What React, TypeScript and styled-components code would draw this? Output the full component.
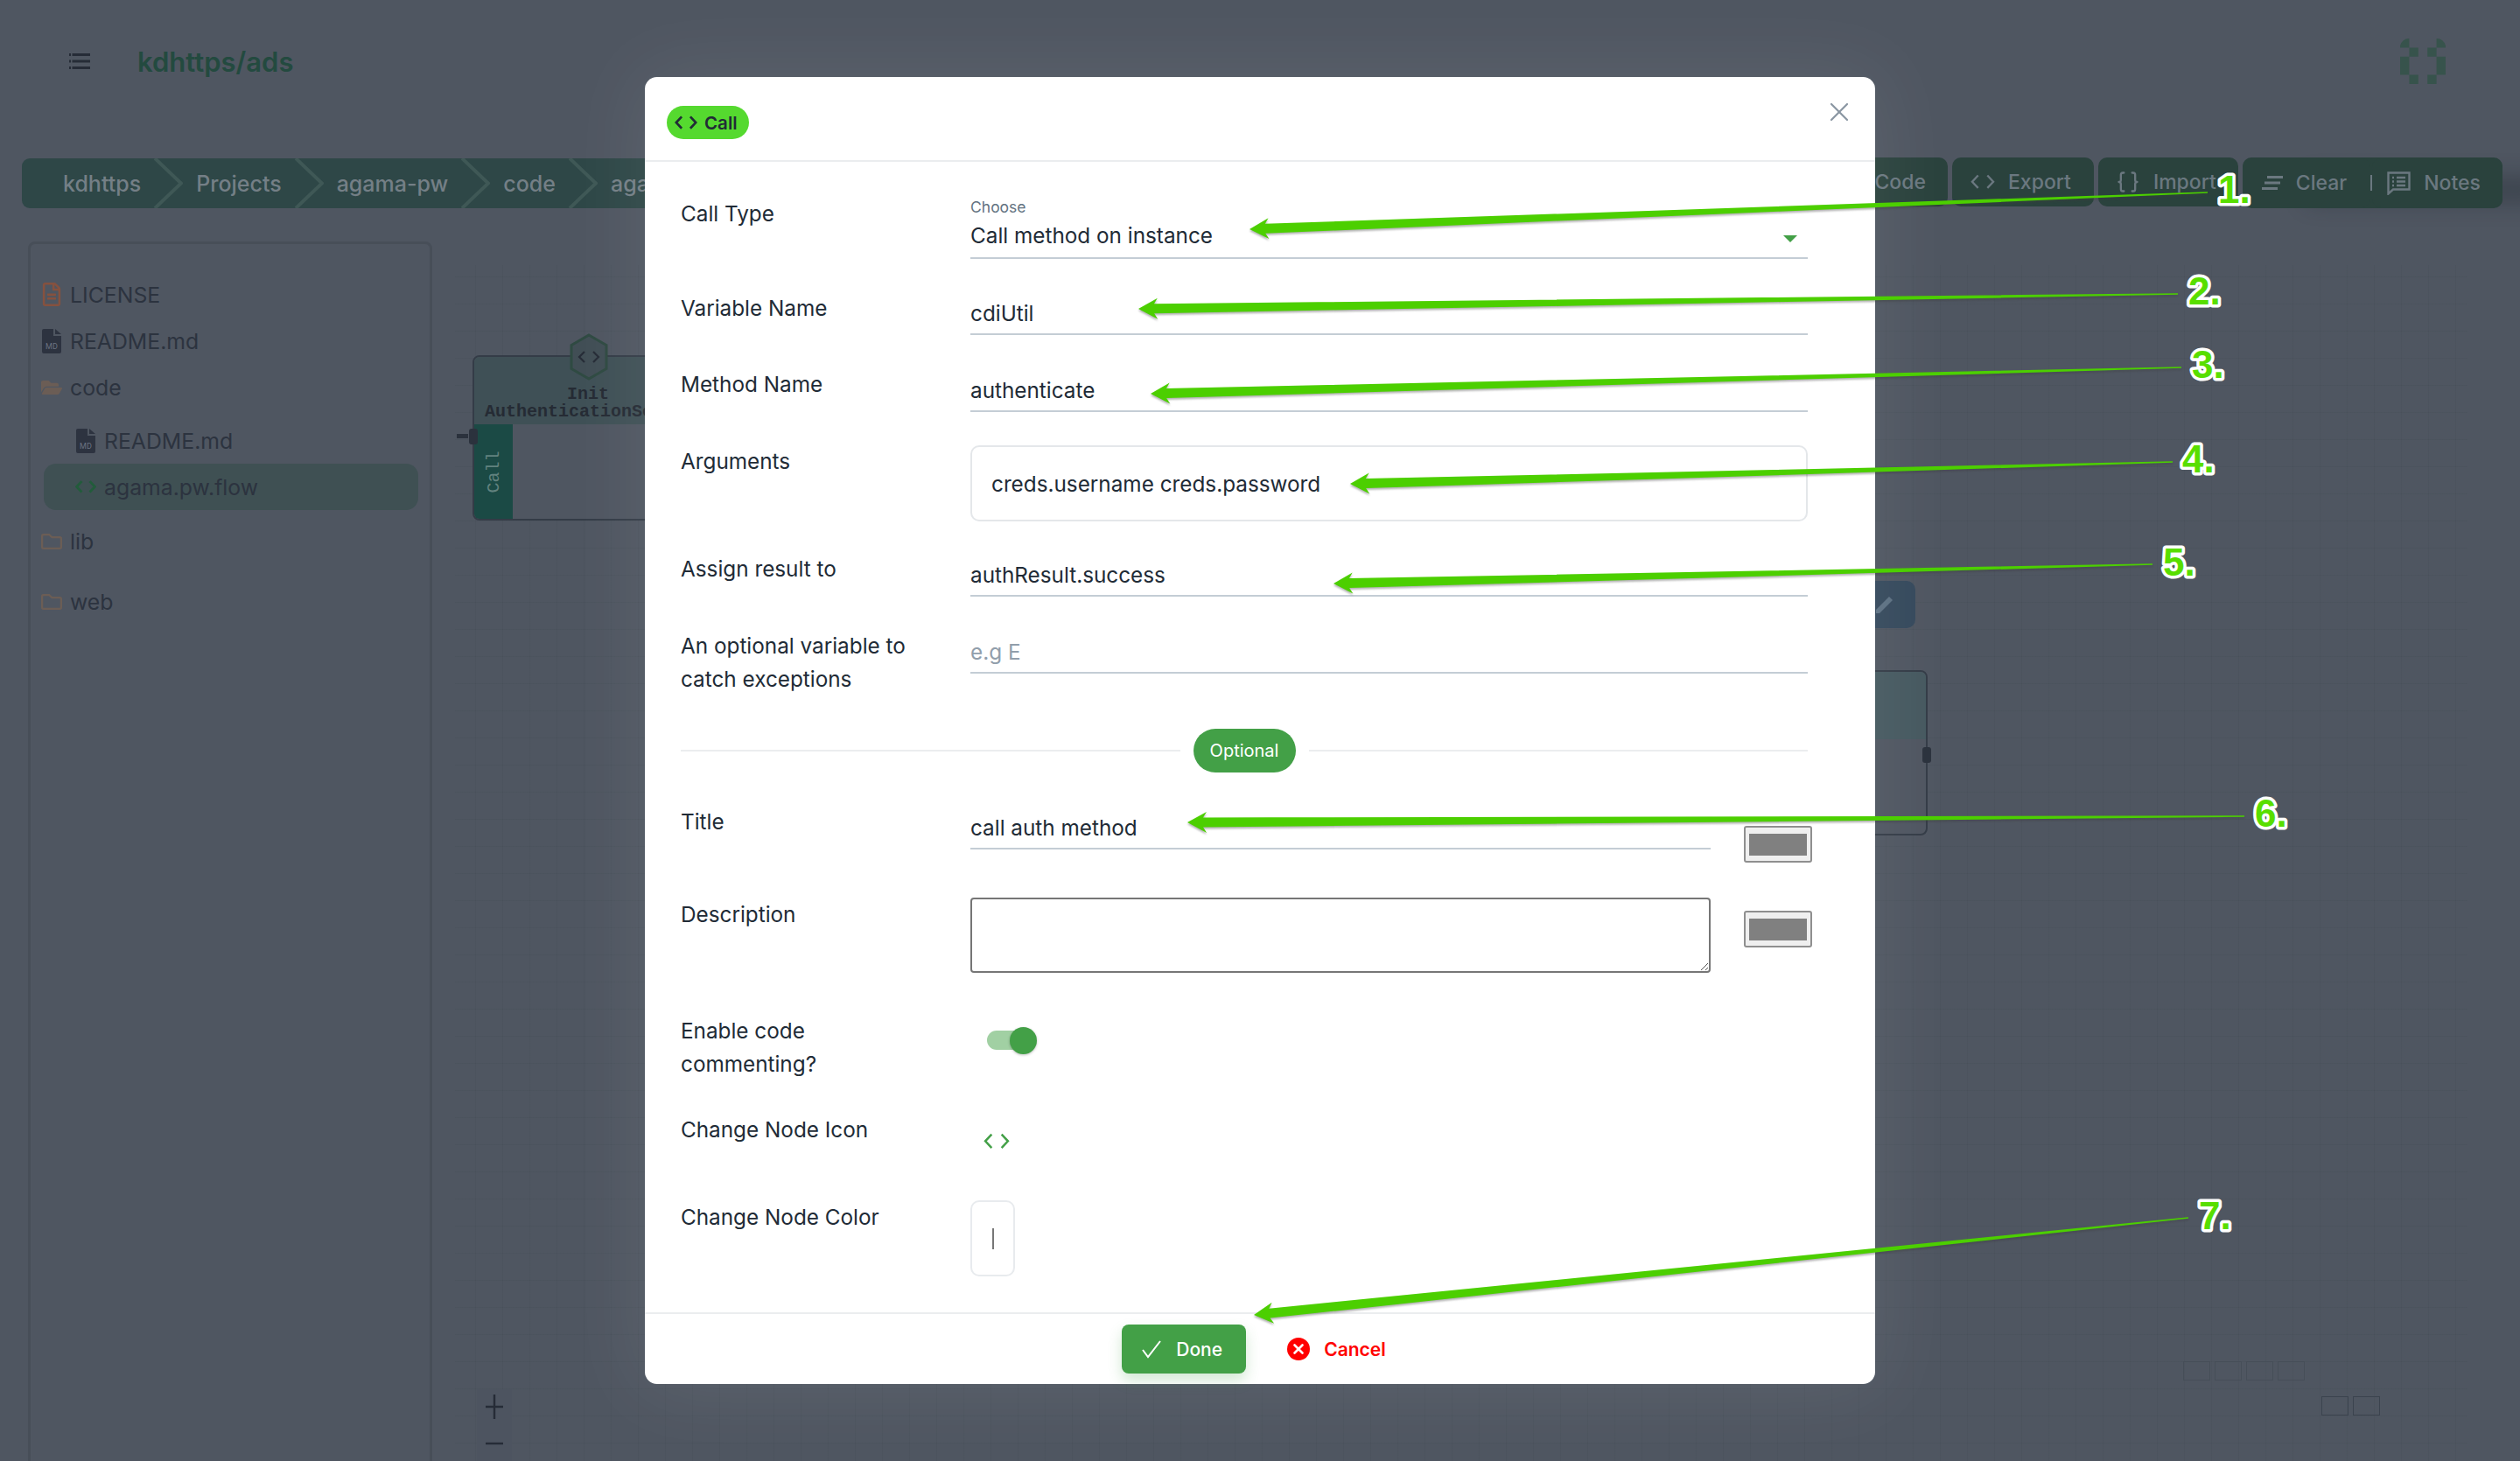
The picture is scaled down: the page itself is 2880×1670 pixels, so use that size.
import React from 'react';
import styled, { createGlobalStyle } from 'styled-components';
import { FaFolderOpen, FaRegFolder, FaRegFileAlt } from 'react-icons/fa';
import { Braces, X } from 'lucide-react';

const GlobalStyle = createGlobalStyle`
  html, body {
    margin: 0;
    padding: 0;
    background: #4f5661;
  }
  * {
    box-sizing: border-box;
  }
`;

const FONT = `'Inter', 'Liberation Sans', sans-serif`;

const Page = styled.div`
  position: relative;
  width: 2880px;
  height: 1670px;
  overflow: hidden;
  background: #4f5661;
  font-family: ${FONT};
  display: flex;
  flex-direction: column;
`;

/* ---------- app behind the dialog ---------- */

const TopBar = styled.header`
  display: flex;
  align-items: center;
  justify-content: space-between;
  height: 181px;
  padding: 0 85px 41px 79px;
`;

const Brand = styled.div`
  display: flex;
  align-items: center;
  gap: 54px;
`;

const BrandName = styled.span`
  color: #234a3f;
  font-size: 31px;
  font-weight: 600;
`;

const ToolRow = styled.div`
  display: flex;
  justify-content: space-between;
  padding: 0 20px 0 25px;
`;

const Crumbs = styled.nav`
  display: flex;
  flex: none;
  width: 1100px;
  height: 57px;
  padding-left: 32px;
  background: #2e4747;
  border-radius: 9px;
`;

const Crumb = styled.span`
  position: relative;
  display: flex;
  align-items: center;
  flex: none;
  padding: 0 48px 0 15px;
  color: #747f86;
  font-size: 25px;
  font-weight: 500;
  white-space: nowrap;
`;

const CrumbChevron = styled.svg`
  position: absolute;
  top: 0;
  right: 0;
  width: 33px;
  height: 57px;
  fill: none;
  stroke: #3f5856;
  stroke-width: 4;
`;

const Tools = styled.div`
  display: flex;
  gap: 5px;
  margin-top: -1px;
`;

const Tool = styled.div<{ $left: number; $right: number }>`
  display: flex;
  align-items: center;
  gap: 15px;
  height: 56px;
  padding: 0 ${(p) => p.$right}px 0 ${(p) => p.$left}px;
  color: #6b7880;
  background: #2a423d;
  border-radius: 10px;
  font-size: 23px;
  font-weight: 500;
  white-space: nowrap;
  svg {
    flex: none;
  }
`;

const ToolSeparator = styled.span`
  width: 2px;
  height: 18px;
  background: #6b7880;
`;

const MergedTools = styled.div`
  display: flex;
  align-items: center;
  background: #2a423d;
  border-radius: 10px;
  box-shadow: 60px 8px 24px -14px rgba(30, 38, 45, 0.35);
`;

const Main = styled.main`
  flex: 1;
  display: flex;
  min-height: 0;
`;

const Sidebar = styled.aside`
  flex: none;
  width: 462px;
  height: 1500px;
  margin: 38px 0 0 32px;
  padding: 31px 13px 0 12px;
  border: 3px solid #474e58;
  border-radius: 8px;
`;

const TreeRow = styled.div<{ $indent?: number; $gap?: number; $active?: boolean }>`
  display: flex;
  align-items: center;
  gap: 9px;
  height: 53px;
  margin-top: ${(p) => p.$gap ?? 0}px;
  margin-left: ${(p) => (p.$active ? 3 : 0)}px;
  padding-left: ${(p) => p.$indent ?? 0}px;
  color: #2c333f;
  font-size: 24.8px;
  border-radius: 14px;
  background: ${(p) => (p.$active ? '#3f5053' : 'transparent')};
`;

const TreeIcon = styled.span<{ $color: string }>`
  display: flex;
  justify-content: center;
  flex: none;
  width: 24px;
  color: ${(p) => p.$color};
`;

const MdBadge = styled.svg`
  display: block;
  width: 22px;
  height: 28px;
`;

const Canvas = styled.section`
  position: relative;
  flex: 1;
  margin: 65px 60px 0 26px;
  background-image: linear-gradient(rgba(40, 46, 54, 0.07) 1px, transparent 1px),
    linear-gradient(90deg, rgba(40, 46, 54, 0.06) 1px, transparent 1px);
  background-size: 31px 31px;
  background-position: 23px 13px;
`;

const FlowNode = styled.div<{ $x: number; $y: number; $w: number }>`
  position: absolute;
  left: ${(p) => p.$x}px;
  top: ${(p) => p.$y}px;
  width: ${(p) => p.$w}px;
  height: 189px;
  background: #4f5661;
  border: 2px solid #343c47;
  border-radius: 8px;
`;

const NodeHead = styled.div<{ $tone: string }>`
  height: 77px;
  background: ${(p) => p.$tone};
  border-radius: 6px 6px 0 0;
`;

const NodeStrip = styled.div`
  position: absolute;
  left: 0;
  top: 77px;
  bottom: 0;
  display: flex;
  align-items: center;
  justify-content: center;
  width: 44px;
  background: #1b4a45;
  border-radius: 0 0 0 6px;
`;

const StripLabel = styled.span`
  transform: rotate(-90deg);
  color: #62827f;
  font-family: 'Liberation Mono', monospace;
  font-size: 20px;
`;

const NodeTitle = styled.div`
  position: absolute;
  left: 12px;
  top: 33px;
  width: 236px;
  color: #252b34;
  font-family: 'Liberation Mono', monospace;
  font-size: 20px;
  font-weight: 700;
  line-height: 20px;
  text-align: center;
  white-space: nowrap;
`;

const Hexagon = styled.svg`
  position: absolute;
  left: 108px;
  top: -27px;
  width: 46px;
  height: 54px;
`;

const Handle = styled.span<{ $side: 'left' | 'right'; $y: number }>`
  position: absolute;
  ${(p) => p.$side}: -6px;
  top: ${(p) => p.$y}px;
  width: 10px;
  height: 18px;
  background: #2b323d;
  border-radius: 3px;
`;

const HandleStub = styled.span`
  position: absolute;
  left: -20px;
  top: 88px;
  width: 13px;
  height: 5px;
  background: #2b323d;
`;

const EditButton = styled.div`
  position: absolute;
  left: 1610px;
  top: 361px;
  display: flex;
  align-items: center;
  width: 59px;
  height: 54px;
  padding-left: 11px;
  background: #35495c;
  border-radius: 10px;
`;

const ZoomControls = styled.div`
  position: absolute;
  left: 25px;
  top: 1285px;
  display: flex;
  flex-direction: column;
  gap: 2px;
  width: 40px;
  background: #4d5460;
`;

const ZoomButton = styled.span`
  display: flex;
  align-items: center;
  justify-content: center;
  height: 40px;
`;

const Minimap = styled.div<{ $x: number; $y: number; $line: string }>`
  position: absolute;
  left: ${(p) => p.$x}px;
  top: ${(p) => p.$y}px;
  display: flex;
  gap: 5px;
  span {
    width: 31px;
    height: 22px;
    border: 1px solid ${(p) => p.$line};
  }
`;

/* ---------- dialog ---------- */

const Overlay = styled.div`
  position: absolute;
  inset: 0;
  display: flex;
  justify-content: center;
  padding-top: 88px;
`;

const Dialog = styled.div`
  display: flex;
  flex-direction: column;
  width: 1406px;
  height: 1494px;
  background: #fff;
  border-radius: 14px;
  box-shadow: 0 0 90px 10px rgba(255, 255, 255, 0.08);
  color: #212b36;
  font-size: 24.3px;
`;

const DialogHead = styled.div`
  display: flex;
  align-items: flex-start;
  justify-content: space-between;
  flex: none;
  height: 97px;
  padding: 33px 23px 0 25px;
  border-bottom: 2px solid #ebedef;
`;

const TypeChip = styled.div`
  display: flex;
  align-items: center;
  gap: 8px;
  width: 94px;
  height: 38px;
  padding: 0 0 0 9px;
  background: #55d92f;
  border-radius: 19px;
  font-size: 20.5px;
  font-weight: 600;
`;

const CloseButton = styled(X)`
  margin-top: -11px;
  color: #8b97a3;
`;

const DialogBody = styled.div`
  flex: 1;
  padding: 3px 77px 0 41px;
`;

const Row = styled.div<{ $h: number; $gap?: number }>`
  display: grid;
  grid-template-columns: 331px 1fr;
  grid-template-rows: minmax(0, 1fr);
  height: ${(p) => p.$h}px;
  margin-top: ${(p) => p.$gap ?? 0}px;
  padding-top: 37px;
`;

const Label = styled.label`
  line-height: 38px;
`;

const Value = styled.div`
  display: flex;
  align-items: flex-start;
  min-width: 0;
  height: 100%;
`;

const UnderlineField = styled.div<{ $w?: number; $muted?: boolean }>`
  align-self: flex-end;
  flex: none;
  width: ${(p) => (p.$w ? `${p.$w}px` : '100%')};
  padding-bottom: 4px;
  border-bottom: 2px solid #c4cdd5;
  color: ${(p) => (p.$muted ? '#919eab' : '#212b36')};
  line-height: 38px;
`;

const SelectField = styled.div`
  position: relative;
  align-self: flex-end;
  width: 100%;
  padding-bottom: 6px;
  border-bottom: 2px solid #c4cdd5;
`;

const SelectHint = styled.div`
  color: #637381;
  font-size: 17.5px;
  line-height: 22px;
`;

const SelectValue = styled.div`
  line-height: 38px;
  margin-top: 2px;
`;

const SelectCaret = styled.span`
  position: absolute;
  right: 12px;
  bottom: 17px;
  border-left: 8px solid transparent;
  border-right: 8px solid transparent;
  border-top: 8px solid #43a047;
`;

const ArgumentBox = styled.div`
  display: flex;
  align-items: center;
  width: 100%;
  height: 87px;
  margin-top: 1px;
  padding-left: 22px;
  border: 2px solid #e4e7ea;
  border-radius: 10px;
`;

const DividerRow = styled.div`
  display: flex;
  align-items: center;
  gap: 15px;
  height: 113px;
  padding-top: 63px;
`;

const DividerLine = styled.span`
  flex: 1;
  height: 2px;
  background: #ebedef;
`;

const OptionalPill = styled.span`
  display: flex;
  align-items: center;
  justify-content: center;
  width: 117px;
  height: 50px;
  background: #43a047;
  border-radius: 25px;
  color: #fff;
  font-size: 20px;
`;

const Swatch = styled.span<{ $top: number }>`
  flex: none;
  display: flex;
  align-items: center;
  justify-content: center;
  width: 78px;
  height: 42px;
  margin: ${(p) => p.$top}px -5px 0 38px;
  background: #efefef;
  border: 2px solid #8f8f8f;
  border-radius: 3px;
  &::after {
    content: '';
    width: 66px;
    height: 25px;
    background: #808080;
  }
`;

const TextArea = styled.div`
  position: relative;
  flex: none;
  width: 846px;
  height: 86px;
  border: 2px solid #767676;
  border-radius: 4px;
`;

const ResizeGrip = styled.svg`
  position: absolute;
  right: 0;
  bottom: 0;
  width: 12px;
  height: 12px;
`;

const Toggle = styled.span`
  position: relative;
  display: block;
  width: 57px;
  height: 31px;
  margin: 15px 0 0 19px;
  &::before {
    content: '';
    position: absolute;
    left: 0;
    top: 4px;
    width: 50px;
    height: 22px;
    background: #a1d0a3;
    border-radius: 11px;
  }
  &::after {
    content: '';
    position: absolute;
    right: 0;
    top: 0;
    width: 31px;
    height: 31px;
    background: #43a047;
    border-radius: 50%;
    box-shadow: 0 1px 3px rgba(0, 0, 0, 0.25);
  }
`;

const NodeIcon = styled.span`
  display: block;
  margin: 18px 0 0 15px;
  color: #43a047;
`;

const ColorInput = styled.div`
  display: flex;
  align-items: center;
  justify-content: center;
  width: 51px;
  height: 87px;
  border: 2px solid #e8ebee;
  border-radius: 10px;
  &::after {
    content: '';
    width: 2px;
    height: 24px;
    background: #777;
  }
`;

const DialogFoot = styled.div`
  display: flex;
  justify-content: center;
  flex: none;
  height: 82px;
  padding: 12px 14px 0 0;
  border-top: 2px solid #ebedef;
`;

const DoneButton = styled.div`
  display: flex;
  align-items: center;
  gap: 17px;
  width: 142px;
  height: 56px;
  padding-left: 23px;
  background: #43a047;
  border-radius: 8px;
  box-shadow: 0 8px 16px rgba(67, 160, 71, 0.24);
  color: #fff;
  font-size: 21px;
  font-weight: 500;
`;

const CancelButton = styled.div`
  display: flex;
  align-items: center;
  gap: 16px;
  height: 56px;
  margin-left: 47px;
  color: #f00;
  font-size: 21px;
  font-weight: 600;
`;

/* ---------- annotations over the screenshot ---------- */

const Annotations = styled.svg`
  position: absolute;
  left: 0;
  top: 0;
  width: 2880px;
  height: 1670px;
  pointer-events: none;
`;

const ArrowShape = styled.polygon`
  fill: #4ccf00;
  filter: drop-shadow(0 2px 1px rgba(60, 60, 60, 0.4));
`;

const StepNumber = styled.text`
  fill: #58de00;
  stroke: #fff;
  stroke-width: 7px;
  stroke-linejoin: round;
  paint-order: stroke;
  font-family: 'Liberation Sans', sans-serif;
  font-size: 44px;
  font-weight: 700;
`;

type Step = { tail: [number, number]; tip: [number, number]; n: number; x: number; y: number };

const STEPS: Step[] = [
  { tail: [2523, 220], tip: [1428, 262], n: 1, x: 2535, y: 232 },
  { tail: [2489, 336], tip: [1301, 353], n: 2, x: 2501, y: 348 },
  { tail: [2493, 420], tip: [1315, 450], n: 3, x: 2505, y: 432 },
  { tail: [2483, 528], tip: [1543, 553], n: 4, x: 2494, y: 540 },
  { tail: [2460, 645], tip: [1524, 667], n: 5, x: 2472, y: 658 },
  { tail: [2565, 933], tip: [1357, 940], n: 6, x: 2577, y: 945 },
  { tail: [2501, 1392], tip: [1433, 1503], n: 7, x: 2513, y: 1405 },
];

// long thin wedge with a barbed head, tail stays about a pixel wide
const arrowPoints = ({ tail, tip }: Step) => {
  const dx = tail[0] - tip[0];
  const dy = tail[1] - tip[1];
  const len = Math.hypot(dx, dy);
  const ux = dx / len;
  const uy = dy / len;
  const at = (along: number, side: number) =>
    `${(tip[0] + ux * along - uy * side).toFixed(1)},${(tip[1] + uy * along + ux * side).toFixed(1)}`;
  return [
    at(0, 0),
    at(22, -12),
    at(18, -5.5),
    at(len, -0.8),
    at(len, 0.8),
    at(18, 5.5),
    at(22, 12),
  ].join(' ');
};

const CodeGlyph = ({ size, width = 2.4 }: { size: number; width?: number }) => (
  <svg width={size} height={size * 0.62} viewBox="0 0 29 18" fill="none" stroke="currentColor" strokeWidth={width}>
    <path d="M9 1.5 2 9l7 7.5M20 1.5 27 9l-7 7.5" />
  </svg>
);

const MenuGlyph = () => (
  <svg width="24" height="18" viewBox="0 0 24 18" fill="none" stroke="#262c37" strokeWidth="3">
    <path d="M3.5 1.5H24M3.5 9H24M3.5 16.5H24" />
    <path d="M0 1.5h2M0 9h2M0 16.5h2" />
  </svg>
);

const LogoGlyph = () => (
  <svg width="52" height="52" viewBox="0 0 5 5" fill="#37534c">
    <path d="M0 1V.8A1 1 0 0 1 1 0v1zM5 1V.8A1 1 0 0 0 4 0v1z" />
    <path d="M1 1h1v1H1zM3 1h1v1H3z" />
    <path d="M0 2h1v2H0zM4 2h1v2H4z" />
    <path d="M1 4h1v1H1zM3 4h1v1H3z" />
  </svg>
);

const ClearGlyph = () => (
  <svg width="24" height="16" viewBox="0 0 24 16" fill="none" stroke="currentColor" strokeWidth="3">
    <path d="M6 1.5h18M3 8h18M0 14.5h18" />
  </svg>
);

const NotesGlyph = () => (
  <svg width="27" height="27" viewBox="0 0 27 27" fill="none" stroke="currentColor" strokeWidth="2.4">
    <path d="M1.5 1.5h24v19H7l-5.5 5z" />
    <path d="M6 7h2M11 7h10M6 11.5h2M11 11.5h10M6 16h2M11 16h10" />
  </svg>
);

const MdFile = () => (
  <MdBadge viewBox="0 0 22 28">
    <path d="M2 0h11v8h9v18a2 2 0 0 1-2 2H2a2 2 0 0 1-2-2V2a2 2 0 0 1 2-2z" fill="#2d3340" />
    <path d="M15 0l7 6h-7z" fill="#2d3340" />
    <text x="11" y="23" textAnchor="middle" fontSize="9" fontFamily="Roboto, sans-serif" fill="#6b7280">
      MD
    </text>
  </MdBadge>
);

const CancelGlyph = () => (
  <svg width="26" height="26" viewBox="0 0 26 26">
    <circle cx="13" cy="13" r="13" fill="#f00" />
    <path d="M8.5 8.5l9 9M17.5 8.5l-9 9" stroke="#fff" strokeWidth="2.6" strokeLinecap="round" />
  </svg>
);

const CRUMBS = ['kdhttps', 'Projects', 'agama-pw', 'code', 'agama.pw.flow'];

const App: React.FC = () => (
  <Page>
    <GlobalStyle />
    <TopBar>
      <Brand>
        <MenuGlyph />
        <BrandName>kdhttps/ads</BrandName>
      </Brand>
      <LogoGlyph />
    </TopBar>
    <ToolRow>
      <Crumbs>
        {CRUMBS.map((name) => (
          <Crumb key={name}>
            {name}
            <CrumbChevron viewBox="0 0 33 57">
              <path d="M1 0l30 28.5L1 57" />
            </CrumbChevron>
          </Crumb>
        ))}
      </Crumbs>
      <Tools>
        <Tool $left={60} $right={25}>Save Code</Tool>
        <Tool $left={21} $right={26}>
          <CodeGlyph size={28} />
          Export
        </Tool>
        <Tool $left={20} $right={25}>
          <Braces size={28} strokeWidth={2} />
          Import
        </Tool>
        <MergedTools>
          <Tool $left={22} $right={27}>
            <ClearGlyph />
            Clear
          </Tool>
          <ToolSeparator />
          <Tool $left={17} $right={25}>
            <NotesGlyph />
            Notes
          </Tool>
        </MergedTools>
      </Tools>
    </ToolRow>
    <Main>
      <Sidebar>
        <TreeRow>
          <TreeIcon $color="#85513f"><FaRegFileAlt size={27} /></TreeIcon>
          LICENSE
        </TreeRow>
        <TreeRow>
          <TreeIcon $color="#2d3340"><MdFile /></TreeIcon>
          README.md
        </TreeRow>
        <TreeRow>
          <TreeIcon $color="#6b5d55"><FaFolderOpen size={28} /></TreeIcon>
          code
        </TreeRow>
        <TreeRow $indent={39} $gap={8}>
          <TreeIcon $color="#2d3340"><MdFile /></TreeIcon>
          README.md
        </TreeRow>
        <TreeRow $indent={36} $active>
          <TreeIcon $color="#225c3b"><CodeGlyph size={27} width={3.4} /></TreeIcon>
          agama.pw.flow
        </TreeRow>
        <TreeRow $gap={9}>
          <TreeIcon $color="#6b5d55"><FaRegFolder size={26} /></TreeIcon>
          lib
        </TreeRow>
        <TreeRow $gap={16}>
          <TreeIcon $color="#6b5d55"><FaRegFolder size={26} /></TreeIcon>
          web
        </TreeRow>
      </Sidebar>
      <Canvas>
        <FlowNode $x={20} $y={103} $w={300}>
          <NodeHead $tone="#3f5056" />
          <NodeStrip><StripLabel>Call</StripLabel></NodeStrip>
          <NodeTitle>
            Init
            <br />
            AuthenticationService
          </NodeTitle>
          <Hexagon viewBox="0 0 46 54" fill="none">
            <path d="M23 2l20 11.5v27L23 52 3 40.5v-27z" fill="#414e55" stroke="#2f4a42" strokeWidth="3" />
            <path d="M18 21l-6 6 6 6M28 21l6 6-6 6" stroke="#262c37" strokeWidth="2.2" />
          </Hexagon>
          <HandleStub />
          <Handle $side="left" $y={82} />
        </FlowNode>
        <EditButton>
          <svg width="26" height="26" viewBox="0 0 26 26" fill="#5c7082">
            <path d="M3 19 18 4l4 4L7 23H3z" />
          </svg>
        </EditButton>
        <FlowNode $x={1580} $y={463} $w={103}>
          <NodeHead $tone="#465960" />
          <Handle $side="right" $y={86} />
        </FlowNode>
        <ZoomControls>
          <ZoomButton>
            <svg width="20" height="28" viewBox="0 0 20 28" stroke="#262c37" strokeWidth="2.4">
              <path d="M0 14h20M10 0v28" />
            </svg>
          </ZoomButton>
          <ZoomButton>
            <svg width="20" height="4" viewBox="0 0 20 4" stroke="#262c37" strokeWidth="2.4">
              <path d="M0 2h20" />
            </svg>
          </ZoomButton>
        </ZoomControls>
        <Minimap $x={1975} $y={1253} $line="#464e58">
          <span /><span /><span /><span />
        </Minimap>
        <Minimap $x={2133} $y={1293} $line="#3b434e">
          <span /><span />
        </Minimap>
      </Canvas>
    </Main>

    <Overlay>
      <Dialog>
        <DialogHead>
          <TypeChip>
            <CodeGlyph size={26} width={3} />
            Call
          </TypeChip>
          <CloseButton size={36} strokeWidth={1.5} />
        </DialogHead>
        <DialogBody>
          <Row $h={108}>
            <Label>Call Type</Label>
            <Value>
              <SelectField>
                <SelectHint>Choose</SelectHint>
                <SelectValue>Call method on instance</SelectValue>
                <SelectCaret />
              </SelectField>
            </Value>
          </Row>
          <Row $h={87}>
            <Label>Variable Name</Label>
            <Value><UnderlineField>cdiUtil</UnderlineField></Value>
          </Row>
          <Row $h={88}>
            <Label>Method Name</Label>
            <Value><UnderlineField>authenticate</UnderlineField></Value>
          </Row>
          <Row $h={123}>
            <Label>Arguments</Label>
            <Value><ArgumentBox>creds.username creds.password</ArgumentBox></Value>
          </Row>
          <Row $h={88}>
            <Label>Assign result to</Label>
            <Value><UnderlineField>authResult.success</UnderlineField></Value>
          </Row>
          <Row $h={88}>
            <Label>
              An optional variable to
              <br />
              catch exceptions
            </Label>
            <Value><UnderlineField $muted>e.g E</UnderlineField></Value>
          </Row>
          <DividerRow>
            <DividerLine />
            <OptionalPill>Optional</OptionalPill>
            <DividerLine />
          </DividerRow>
          <Row $h={88}>
            <Label>Title</Label>
            <Value>
              <UnderlineField $w={846}>call auth method</UnderlineField>
              <Swatch $top={24} />
            </Value>
          </Row>
          <Row $h={133} $gap={18}>
            <Label>Description</Label>
            <Value>
              <TextArea>
                <ResizeGrip viewBox="0 0 12 12" stroke="#555" strokeWidth="1">
                  <path d="M3 11l8-8M8 11l3-3" />
                </ResizeGrip>
              </TextArea>
              <Swatch $top={15} />
            </Value>
          </Row>
          <Row $h={113}>
            <Label>
              Enable code
              <br />
              commenting?
            </Label>
            <Value><Toggle /></Value>
          </Row>
          <Row $h={100}>
            <Label>Change Node Icon</Label>
            <Value><NodeIcon><CodeGlyph size={30} /></NodeIcon></Value>
          </Row>
          <Row $h={165}>
            <Label>Change Node Color</Label>
            <Value><ColorInput /></Value>
          </Row>
        </DialogBody>
        <DialogFoot>
          <DoneButton>
            <svg width="22" height="22" viewBox="0 0 22 22" fill="none" stroke="#fff" strokeWidth="2">
              <path d="M1 12l6 8L21 2" />
            </svg>
            Done
          </DoneButton>
          <CancelButton>
            <CancelGlyph />
            Cancel
          </CancelButton>
        </DialogFoot>
      </Dialog>
    </Overlay>

    <Annotations viewBox="0 0 2880 1670">
      {STEPS.map((step) => (
        <ArrowShape key={step.n} points={arrowPoints(step)} />
      ))}
      {STEPS.map((step) => (
        <StepNumber key={step.n} x={step.x} y={step.y}>
          {step.n}.
        </StepNumber>
      ))}
    </Annotations>
  </Page>
);

export default App;
